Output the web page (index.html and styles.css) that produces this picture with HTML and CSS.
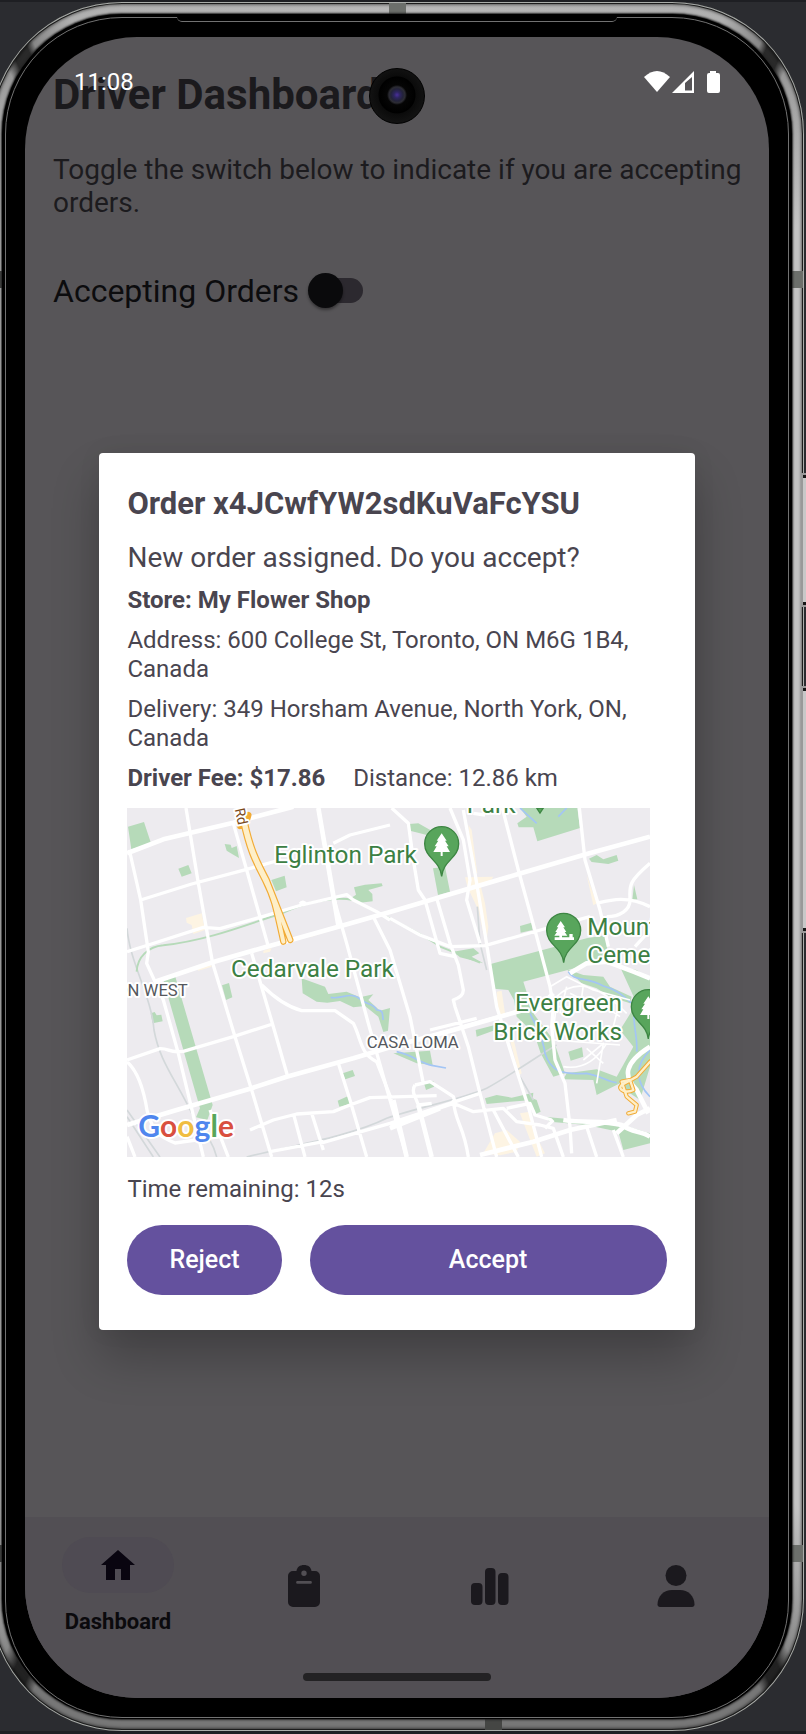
FILE: index.html
```html
<!DOCTYPE html>
<html lang="en">
<head>
<meta charset="utf-8">
<meta name="viewport" content="width=device-width, initial-scale=1">
<title>Driver Dashboard</title>
<link rel="stylesheet" href="styles.css">
</head>
<body>
<div class="phone">
  <span class="band band-top"></span>
  <span class="band band-bottom"></span>
  <span class="band band-side band-left band-high"></span>
  <span class="band band-side band-right band-high"></span>
  <span class="band band-side band-left band-low"></span>
  <span class="band band-side band-right band-low"></span>
  <span class="side-key key-power"></span>
  <span class="side-key key-volume"></span>
  <div class="bezel">
    <span class="lip"></span>
    <div class="screen">
      <main class="page">
        <h1 class="page-title">Driver Dashboard</h1>
        <p class="page-intro">Toggle the switch below to indicate if you are accepting orders.</p>
        <div class="toggle-row">
          <label for="accepting">Accepting Orders</label>
          <input class="switch" id="accepting" type="checkbox" role="switch">
        </div>
      </main>

      <nav class="tabs" aria-label="Main">
        <a class="tab tab-active" href="#dashboard">
          <span class="tab-pill">
            <svg class="icon-home" viewBox="0 0 34 30" aria-hidden="true"><path d="M17 0 34 15H29V30H20V19H14V30H5V15H0Z"/></svg>
          </span>
          <span class="tab-label">Dashboard</span>
        </a>
        <a class="tab" href="#orders" aria-label="Orders">
          <svg class="icon-tab" viewBox="0 0 42 42" aria-hidden="true"><path fill-rule="evenodd" d="M10 6h3.500C14 2 17 0 21 0s7 2 7.500 6H32a5 5 0 0 1 5 5v26a5 5 0 0 1-5 5H10a5 5 0 0 1-5-5V11a5 5 0 0 1 5-5ZM21 5.500a2.700 2.700 0 1 0 0 5.400 2.700 2.700 0 0 0 0-5.400ZM14.500 16a1.400 1.400 0 0 0 0 2.800h13a1.400 1.400 0 0 0 0-2.800Z"/></svg>
        </a>
        <a class="tab" href="#stats" aria-label="Statistics">
          <svg class="icon-tab" viewBox="0 0 42 42" aria-hidden="true"><rect x="2" y="18" width="11.500" height="22" rx="4"/><rect x="16" y="3" width="10.500" height="37" rx="4"/><rect x="29" y="8" width="10.500" height="32" rx="4"/></svg>
        </a>
        <a class="tab" href="#profile" aria-label="Profile">
          <svg class="icon-tab" viewBox="0 0 42 42" aria-hidden="true"><circle cx="21" cy="10.500" r="10.500"/><path d="M17 25h8c8 0 14.500 6 14.500 14.500 0 1.500-1 2.500-2.500 2.500H5c-1.500 0-2.500-1-2.500-2.500C2.500 31 9 25 17 25Z"/></svg>
        </a>
      </nav>
      <span class="home-bar"></span>

      <div class="overlay">
        <section class="dialog" role="dialog" aria-labelledby="order-title">
          <h2 class="order-title" id="order-title">Order x4JCwfYW2sdKuVaFcYSU</h2>
          <p class="lead">New order assigned. Do you accept?</p>
          <p class="line"><strong>Store: My Flower Shop</strong></p>
          <p class="line">Address: 600 College St, Toronto, ON M6G 1B4, Canada</p>
          <p class="line">Delivery: 349 Horsham Avenue, North York, ON, Canada</p>
          <p class="line fee"><strong>Driver Fee: $17.86</strong><span>Distance: 12.86 km</span></p>
          <svg class="map" viewBox="21 24 1569 1047" role="img" aria-label="Map of the delivery area">
            <rect class="land" x="21" y="24" width="1569" height="1047"/>
            <g class="park">
              <path d="M24 80 72 66 93 130 34 148ZM175 206 205 195 215 220 185 230ZM454 240 494 227 500 262 468 274ZM314 132 332 134 335 144 350 138 357 174 340 164 320 152ZM130 540 166 530 278 915 262 960 228 952 240 925ZM306 556 327 549 337 592 318 600ZM92 640 104 636 110 646 124 644 128 664 98 670ZM545 535 615 560 625 582 680 575 720 592 760 583 745 600 780 632 810 624 804 692 790 696 775 650 735 618 700 622 660 603 622 608 590 605 548 580ZM668 820 698 810 705 828 676 838ZM653 902 683 889 690 912 658 920ZM702 262 735 254 785 250 788 258 745 270 757 282 758 304 720 308 690 296 708 284Z"/>
              <path d="M868 72 895 70 940 95 980 120 940 110 900 100 870 92ZM939 205 975 200 990 275 954 285ZM1192 70 1220 50 1200 24H1372L1380 84 1252 124 1240 82 1196 82ZM1407 176 1430 165 1450 178 1490 165 1495 182 1465 192 1415 186ZM1542 255 1552 298 1537 300ZM1200 378 1234 368 1238 390 1202 398ZM1112 492 1400 415 1460 405 1462 470 1380 500 1210 545 1240 640 1300 720 1335 820 1300 830 1262 760 1242 700 1190 650 1182 600 1165 570 1122 566ZM1067 690 1125 675 1120 692 1070 710ZM1000 455 1060 445 1078 460 1055 470 1090 490 1020 472ZM1095 895 1130 885 1175 893 1240 878 1238 900 1170 905 1100 912ZM1220 888 1250 900 1262 935 1240 945ZM1345 755 1386 742 1390 770 1352 782ZM1340 508 1390 525 1450 530 1470 560 1535 590 1530 610 1470 590 1430 565 1385 550ZM1500 500 1550 510 1590 540V800L1560 900 1530 880 1500 850 1430 885 1420 840 1330 838 1340 820 1430 808 1490 830 1540 740 1500 690 1550 610ZM1270 950 1490 970 1590 1000V1030L1510 1050 1495 995 1400 975 1290 965ZM820 760 930 752 938 795 890 790ZM912 850 940 843 942 860 918 870Z"/>
            </g>
            <g class="built">
              <path d="M198 354 245 340 255 390 220 402 215 375 200 368ZM230 500 270 486 275 500 235 512ZM1035 232 1120 230 1110 245 1080 250 1095 310 1105 380 1100 420 1090 400 1075 330 1042 260ZM1130 575 1145 572 1155 640 1135 650ZM1125 1000 1160 990 1200 1025 1190 1055 1140 1066 1090 1060ZM1200 940 1225 936 1250 1010 1275 1060 1250 1070 1215 980ZM1400 225 1430 310 1420 316ZM560 405 620 388 630 392 570 412ZM430 452 455 444 450 455 430 460ZM1045 75 1055 90 1072 220 1060 220ZM1170 720 1180 715 1205 820 1198 825Z"/>
            </g>
            <g class="rail">
              <path d="M21 385C30 490 95 590 102 690 120 790 170 840 225 960 270 1010 285 1050 290 1071M380 1071C500 1040 690 1010 800 955 900 920 1020 900 1100 865 1180 820 1250 770 1310 735M21 930 120 1071M21 950 100 1071M1072 320 1080 430 1100 510M1200 830 1240 900"/>
            </g>
            <g class="trail"><path d="M50 515C52 470 85 440 130 436 270 420 390 370 480 342 570 300 650 290 700 300 790 350 910 400 960 440L1080 488"/></g>
            <g class="water"><path d="M632 592C665 600 690 570 725 600 740 615 760 608 770 630 795 630 785 650 790 660M830 755C880 765 900 790 935 796L978 804M1345 515C1360 545 1400 530 1450 558 1500 570 1520 600 1570 640M1230 640C1250 680 1270 720 1275 760 1290 810 1320 825 1400 820 1450 830 1460 845 1490 848M1550 600C1530 670 1555 700 1550 755M1590 750C1540 800 1550 850 1590 890M1200 24 1250 70M1340 24 1315 50"/></g>
            <g class="minor">
              <path d="M1290 560 1340 530 1420 570 1530 600M1310 590C1370 530 1440 560 1520 640M1280 620 1350 620 1410 590 1500 650M1340 560 1320 640M1390 555 1380 630M1300 720 1500 735M1330 800C1390 810 1430 780 1460 730M1400 745 1450 790M1390 780 1450 730 1430 850M1500 600 1480 680M1350 580 1430 620M1310 610 1300 690"/>
            </g>
            <g class="road">
              <path d="M28 150 62 300 85 455 80 490 130 600 175 760 250 1071M198 24 235 250 260 390 278 490 345 710 395 870 455 1071M340 70 380 210 445 440M395 460 460 680 502 826M62 300 215 252 380 208 480 180M640 130 690 105 810 75M21 455 85 435 250 382 300 386 420 352 545 315 680 284 700 300 770 335 810 360M540 312Q548 300 560 315M425 555C460 590 500 620 545 632H645L700 670C725 720 720 760 770 785L815 900M21 780 120 746C150 745 145 760 190 754L340 710 458 672M21 785C50 810 70 860 82 935 100 1000 120 1010 165 1029L300 1010M655 790 690 900 740 1071M390 990 460 960 530 942 640 935 690 915 750 893 950 887M520 940 555 1071M575 940 610 1050M270 930 325 1071M21 1010 45 1071M600 1030 810 970 900 940 1080 880M450 1055 610 1025"/>
              <path d="M595 24 640 290 680 430 745 670 810 900 860 1071M760 350 810 450 870 650 910 850M815 24 865 70 880 180 895 270 915 300 960 460 1005 470M990 24 1030 120 1050 240 1040 300 1080 430M950 295 990 430 1015 495 1030 570Q1030 590 1000 600L1005 620 1045 740 1080 880 1130 1071M810 355 900 405 990 440 1095 437 1250 393 1410 350M1030 30 1065 220 1085 340 1130 620 1180 780 1225 920 1265 1071M1147 24 1195 210 1250 410 1290 560 1300 620 1295 680 1305 780 1335 850 1350 980 1355 1060M1378 24 1395 180 1440 330 1465 440M1430 310C1470 300 1520 285 1590 320M1590 190C1520 250 1530 260 1530 300 1530 330 1500 350 1460 350M1590 390 1545 440M810 975 1000 910 1060 935 1150 925 1190 965 1260 975 1300 985 1330 1071M960 700 1190 635M930 690 1070 655M885 855 930 845Q970 870 1000 890L1010 920M885 855Q875 870 885 890L895 915 935 910M1095 45 1060 40M1160 925 1230 910 1245 945 1295 960M1300 960 1275 985M1000 900C1005 970 1030 970 1045 1071M1400 980 1430 1071M1480 990 1510 1071M1120 930 1195 1071"/>
            </g>
            <g class="main-road">
              <path d="M21 160 130 118 340 68 520 20M105 545 280 486 440 440 500 424 655 380 810 336 1000 280 1195 222 1400 162 1590 110M21 975 170 930 390 866 500 830 700 775 810 742 1000 690 1210 630M1240 638 1300 580M810 985 960 925M595 24 655 375M1350 520 1400 490 1460 485 1540 515 1590 535M1330 960C1400 970 1450 960 1505 975 1540 1000 1560 990 1590 1010M1080 1065 1240 1025 1350 990 1490 960M1590 740C1510 790 1510 830 1550 870L1585 940M1490 1000 1550 945 1590 925M820 900 860 1071M895 915 935 1071"/>
            </g>
            <g fill="none" stroke-linecap="round" stroke-linejoin="round">
              <path class="freeway-edge" d="M370 65C390 160 410 190 435 240 460 290 465 310 490 425M374 65C395 160 415 190 440 240 460 290 480 340 511 420M385 45 376 75 360 78"/>
              <path class="freeway-fill" d="M374 65C395 160 415 190 440 240 460 290 480 340 511 420M370 65C390 160 410 190 435 240 460 290 465 310 490 425"/>
              <path class="ramp-edge" d="M1590 785 1550 830 1505 855C1490 870 1520 880 1540 870L1530 840 1505 845 1520 890 1550 915 1545 935 1525 940"/>
              <path class="ramp-fill" d="M1590 785 1550 830 1505 855C1490 870 1520 880 1540 870L1530 840 1505 845 1520 890 1550 915 1545 935 1525 940"/>
            </g>
            <g class="pin">
              <path d="M965 229C960 180 914 175 914 131A51 51 0 0 1 1016 131C1016 175 970 180 965 229Z"/>
              <path d="M1331 488C1326 440 1280 435 1280 391A51 51 0 0 1 1382 391C1382 435 1336 440 1331 488Z"/>
              <path d="M1585 717C1580 669 1534 664 1534 620A51 51 0 0 1 1636 620C1636 664 1590 669 1585 717Z"/>
              <path d="M1250 24H1270L1260 39Z"/>
            </g>
            <g class="tree">
              <path d="M965 100 980 122H975L986 139H980L990 156H968V168H962V156H940L950 139H944L955 122H950Z"/>
              <path d="M1322 363 1335 382H1330L1339 396H1334L1342 407H1326V412H1348V402H1358V412H1362V420H1304V412H1318V407H1303L1311 396H1306L1315 382H1310Z"/>
              <path d="M1585 589 1600 611H1595L1606 628H1600L1610 645H1588V657H1582V645H1560L1570 628H1564L1575 611H1570Z"/>
            </g>
            <g class="place">
              <text x="463" y="188">Eglinton Park</text>
              <text x="333" y="530">Cedarvale Park</text>
              <text x="1040" y="38">Park</text>
              <text x="1402" y="404">Mount</text>
              <text x="1402" y="490">Cemetery</text>
              <text x="1506" y="632" text-anchor="end">Evergreen</text>
              <text x="1506" y="719" text-anchor="end">Brick Works</text>
            </g>
            <g class="district">
              <text x="203" y="588" text-anchor="end">ON WEST</text>
              <text x="740" y="745">CASA LOMA</text>
            </g>
            <text class="road-name" transform="translate(344 28) rotate(78)">Rd</text>
            <text class="brand" x="55" y="1010"><tspan fill="#4f86ee">G</tspan><tspan fill="#d9503f">o</tspan><tspan fill="#f0bd42">o</tspan><tspan fill="#4f86ee">g</tspan><tspan fill="#57a65a">l</tspan><tspan fill="#d9503f">e</tspan></text>
          </svg>
          <p class="line timer">Time remaining: 12s</p>
          <div class="actions">
            <button class="button" type="button">Reject</button>
            <button class="button button-wide" type="button">Accept</button>
          </div>
        </section>
      </div>

      <div class="status">
        <span class="clock">11:08</span>
        <svg class="status-icons" viewBox="0 0 78 24" aria-hidden="true">
          <path d="M0 7Q13-5 26 7L13 22Z"/>
          <path fill-rule="evenodd" d="M28 23 50 1V23ZM41 13V20.500H48V7Z"/>
          <path d="M66 1H72V3H74Q76 3 76 5V21Q76 23 74 23H65Q63 23 63 21V5Q63 3 65 3H66Z"/>
        </svg>
      </div>
      <span class="camera"></span>
    </div>
  </div>
</div>
</body>
</html>
```
FILE: styles.css
```css
* {
  box-sizing: border-box;
}

body {
  margin: 0;
  min-height: 100vh;
  display: flex;
  overflow-x: hidden;
  background: #2b2c30;
  border-top: 2px solid #1e1f23;
  border-bottom: 3px solid #1e1f23;
  font-family: Roboto, "Liberation Sans", sans-serif;
  color: #49454f;
}

h1, h2, p {
  margin: 0;
}

/* Device shell */
.phone {
  position: relative;
  flex: 1;
  display: flex;
  margin: 0 2px 0 -10px;
  padding: 12px;
  border-radius: 132px;
  background: conic-gradient(#b8b8b8 0deg, #b0b0b0 21deg, #888 23.800deg, #2a2a2a 24.300deg, #2a2a2a 25.300deg, #999 26deg, #c4c4c4 32deg, #c4c4c4 148deg, #888 153.500deg, #222 154.500deg, #222 155.500deg, #777 156.200deg, #777 203.800deg, #222 204.500deg, #222 205.500deg, #888 206.500deg, #c4c4c4 212deg, #c4c4c4 328deg, #999 334deg, #2a2a2a 334.700deg, #2a2a2a 335.700deg, #888 336.200deg, #b0b0b0 339deg, #b8b8b8 360deg);
  box-shadow: inset 0 0 0 1px #aaadaa, inset 0 0 0 2px #1c1c1c, inset 0 0 3px 3px rgba(0, 0, 0, 0.5);
}

.bezel {
  position: relative;
  flex: 1;
  display: flex;
  padding: 23px 23px 21px;
  border-radius: 120px;
  background: #000;
  box-shadow: 0 0 2px 1px #222;
}

.bezel::before {
  content: "";
  position: absolute;
  inset: 3px 3px 1px;
  border: 1px solid #727272;
  border-radius: 117px;
}

.lip {
  position: absolute;
  top: 3px;
  left: 50%;
  width: 440px;
  height: 5px;
  margin-left: -220px;
  border-bottom: 1px solid #727272;
  border-radius: 0 0 8px 8px;
  background: #000;
}

.band {
  position: absolute;
  background: #6c6f6b;
}

.band-top, .band-bottom {
  width: 17px;
  height: 12px;
}

.band-top { top: 1px; left: 399px; }
.band-bottom { bottom: 1px; left: 495px; background: #454644; }
.band-side { width: 12px; height: 17px; }
.band-left { left: 3px; background: #454644; }
.band-right { right: 1px; }
.band-high { top: 269px; }
.band-low { bottom: 169px; }

.side-key {
  position: absolute;
  right: -2px;
  width: 3px;
  border: solid #161616;
  border-width: 3px 0;
  background: #c8c8c8;
  box-shadow: 0 0 0 2px #999;
}

.key-power { top: 473px; height: 130px; }
.key-volume { top: 686px; height: 243px; }

.screen {
  position: relative;
  flex: 1;
  display: flex;
  flex-direction: column;
  overflow: hidden;
  border-radius: 112px;
  background: #575558;
}

/* Status bar and camera lie over the page */
.status {
  position: absolute;
  inset: 32px 47px auto 49px;
  display: flex;
  justify-content: space-between;
  align-items: center;
  color: #fff;
}

.clock {
  font-size: 24px;
  line-height: 26px;
}

.status-icons {
  width: 78px;
  height: 24px;
  fill: #fff;
}

.camera {
  position: absolute;
  top: 31px;
  left: 50%;
  width: 56px;
  height: 56px;
  margin-left: -28px;
  border-radius: 50%;
  border: 1px solid #000;
  background: radial-gradient(circle at 50% 48%, #4a2f9a 0, #2d2560 3px, #23233a 6px, #2c2c33 8px, #050505 10px, #000 18px, #0b0b0b 19px, #121212 27px);
}

/* Dashboard page */
.page {
  flex: 1;
  padding: 34px 16px 34px 28px;
}

.page-title {
  font-size: 42px;
  line-height: 48px;
  font-weight: 700;
  color: #1b1a1d;
}

.page-intro {
  margin-top: 34px;
  font-size: 28px;
  line-height: 33px;
  color: #1c1b1e;
}

.toggle-row {
  display: flex;
  align-items: center;
  gap: 9px;
  margin-top: 53px;
  font-size: 32px;
  line-height: 38px;
  color: #0c0c0e;
}

.switch {
  appearance: none;
  position: relative;
  width: 56px;
  height: 36px;
  margin: 0;
}

.switch::before {
  content: "";
  position: absolute;
  inset: 5px 1px 6px 8px;
  border-radius: 13px;
  background: #2c292f;
}

.switch::after {
  content: "";
  position: absolute;
  top: 0;
  left: 0;
  width: 35px;
  height: 35px;
  border-radius: 50%;
  background: #0a0a0c;
  box-shadow: 0 2px 3px rgba(0, 0, 0, 0.4);
}

/* Bottom tabs */
.tabs {
  display: grid;
  grid-template-columns: repeat(4, 1fr);
  height: 181px;
  padding-bottom: 44px;
  background: #524f54;
}

.tab {
  display: flex;
  flex-direction: column;
  align-items: center;
  justify-content: center;
  color: #1b191e;
  fill: currentColor;
  text-decoration: none;
}

.tab-active {
  gap: 17px;
  color: #0b0a0d;
}

.tab-pill {
  display: flex;
  align-items: center;
  justify-content: center;
  width: 112px;
  height: 56px;
  border-radius: 28px;
  background: #4f4b53;
}

.icon-home {
  width: 34px;
  height: 30px;
  fill: #090510;
}

.tab-label {
  font-size: 22px;
  line-height: 24px;
  font-weight: 700;
}

.icon-tab {
  width: 42px;
  height: 42px;
}

.home-bar {
  position: absolute;
  bottom: 17px;
  left: 50%;
  width: 188px;
  height: 8px;
  margin-left: -94px;
  border-radius: 4px;
  background: #232224;
}

/* Order dialog */
.overlay {
  position: absolute;
  inset: 0;
  display: flex;
  align-items: center;
  justify-content: center;
  padding-top: 48px;
}

.dialog {
  width: 80%;
  padding: 32px 28px 35px;
  border-radius: 4px;
  background: #fff;
  box-shadow: 0 28px 48px rgba(0, 0, 0, 0.24), 0 0 24px rgba(0, 0, 0, 0.06);
}

.order-title {
  font-size: 31px;
  line-height: 38px;
  font-weight: 700;
}

.lead {
  margin-top: 18px;
  font-size: 28px;
  line-height: 34px;
}

.line {
  margin-top: 11px;
  font-size: 24px;
  line-height: 29px;
}

.fee {
  display: flex;
  gap: 28px;
}

.map {
  display: block;
  width: 97%;
  margin-top: 15px;
}

.timer {
  margin-top: 18px;
}

.actions {
  display: flex;
  gap: 28px;
  margin-top: 21px;
}

.button {
  height: 70px;
  padding: 0 42px;
  border: 0;
  border-radius: 35px;
  background: #64519e;
  color: #fff;
  font: 500 25px/28px Roboto, "Liberation Sans", sans-serif;
}

.button-wide {
  flex: 1;
}

/* Map drawing */
.land { fill: #edebef; }
.park { fill: #b6dab9; }
.built { fill: #fdf4e3; }
.rail, .trail, .water, .minor, .road, .main-road { fill: none; stroke-linejoin: round; }
.rail { stroke: #d3d8da; stroke-width: 5; }
.trail { stroke: #b6dab9; stroke-width: 6; }
.water { stroke: #a3c5f5; stroke-width: 5; }
.minor { stroke: #fff; stroke-width: 5; }
.road { stroke: #fff; stroke-width: 10; }
.main-road { stroke: #fff; stroke-width: 14; }
.freeway-edge { stroke: #f2ab35; stroke-width: 19; }
.freeway-fill { stroke: #feefc8; stroke-width: 12; }
.ramp-edge { stroke: #f2ab35; stroke-width: 13; }
.ramp-fill { stroke: #feefc8; stroke-width: 7; }
.pin { fill: #58a55c; stroke: #3d8643; stroke-width: 4; }
.tree { fill: #fff; }

.place, .district, .road-name, .brand {
  stroke: #fff;
  stroke-width: 12px;
  stroke-linejoin: round;
  paint-order: stroke;
}

.place { font-size: 73px; fill: #3c8043; }
.district { font-size: 50px; fill: #55585d; }
.road-name { font-size: 42px; fill: #7b4a1a; }
.brand { font: 700 90px Lato, sans-serif; }
```
